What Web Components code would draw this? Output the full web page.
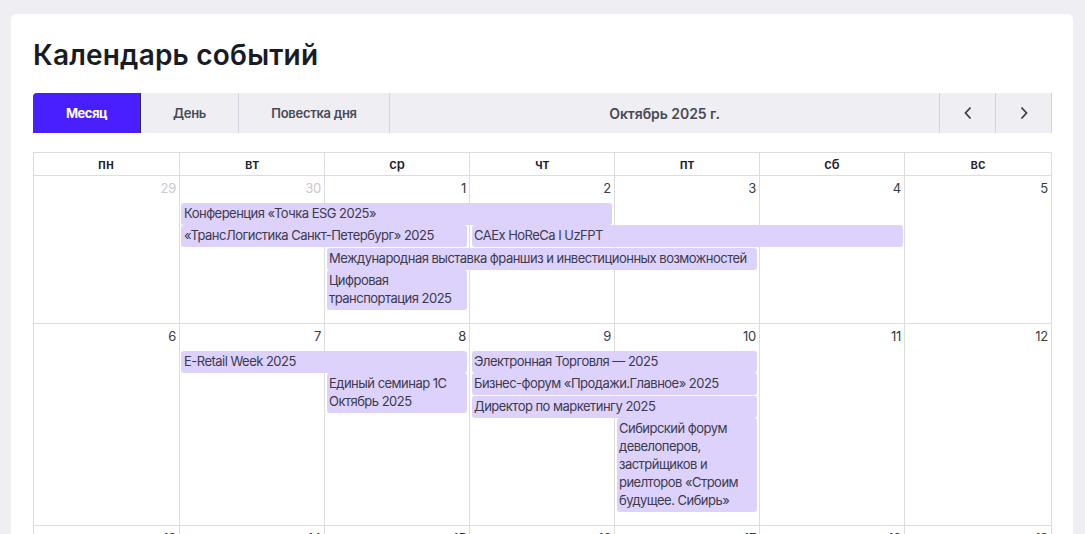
<!DOCTYPE html>
<html lang="ru"><head><meta charset="utf-8"><title>Календарь событий</title>
<style>
html,body{margin:0;padding:0;height:534px;overflow:hidden;background:#eeeef3;font-family:Inter,"Noto Sans",sans-serif;}
</style></head><body>
<cal-page>
  <h-title slot="title">Календарь событий</h-title>
  <cal-toolbar slot="toolbar">
    <tool-btn active style="width:108px">Месяц</tool-btn>
    <tool-btn style="width:98px">День</tool-btn>
    <tool-btn style="width:151px">Повестка дня</tool-btn>
    <tool-title>Октябрь 2025 г.</tool-title>
    <tool-btn style="width:56px" icon="left"></tool-btn>
    <tool-btn style="width:56px" icon="right"></tool-btn>
  </cal-toolbar>
  <cal-head slot="cal"></cal-head>
  <cal-week slot="cal" days="29,30,1,2,3,4,5" muted="2" style="height:148px" rows="27px 22px 23px 22px 40px">
    <cal-event first style="grid-column:2/5;grid-row:2">Конференция «Точка ESG 2025»</cal-event>
    <cal-event first style="grid-column:2/4;grid-row:3">«ТрансЛогистика Санкт-Петербург» 2025</cal-event>
    <cal-event style="grid-column:4/7;grid-row:3;margin-right:2px">CAEx HoReCa I UzFPT</cal-event>
    <cal-event style="grid-column:3/6;grid-row:4">Международная выставка франшиз и инвестиционных возможностей</cal-event>
    <cal-event style="grid-column:3/4;grid-row:5">Цифровая транспортация 2025</cal-event>
  </cal-week>
  <cal-week slot="cal" days="6,7,8,9,10,11,12" style="height:202px" rows="27px 22px 23px 22px 94px">
    <cal-event first style="grid-column:2/4;grid-row:2">E-Retail Week 2025</cal-event>
    <cal-event style="grid-column:3/4;grid-row:3/5">Единый семинар 1С Октябрь 2025</cal-event>
    <cal-event style="grid-column:4/6;grid-row:2">Электронная Торговля — 2025</cal-event>
    <cal-event style="grid-column:4/6;grid-row:3">Бизнес-форум «Продажи.Главное» 2025</cal-event>
    <cal-event style="grid-column:4/6;grid-row:4">Директор по маркетингу 2025</cal-event>
    <cal-event style="grid-column:5/6;grid-row:5">Сибирский форум девелоперов, застрйщиков и риелторов «Строим будущее. Сибирь»</cal-event>
  </cal-week>
  <cal-week slot="cal" days="13,14,15,16,17,18,19" style="height:150px" rows="27px"></cal-week>
</cal-page>
<script>
const tpl=(css,html)=>{const t=document.createElement('template');t.innerHTML=`<style>${css}</style>${html}`;return t;};
const def=(name,t,init)=>customElements.define(name,class extends HTMLElement{
  constructor(){super();this.attachShadow({mode:'open'}).appendChild(t.content.cloneNode(true));}
  connectedCallback(){init&&init.call(this);}
});
def('cal-page',tpl(`:host{display:block;box-sizing:border-box;margin:14px 12px 0 11px;padding:22px 21px 22px 22px;background:#fff;border-radius:5px 5px 0 0;color:#1c1f2b}
.cal{display:block;margin-top:19px;}`,
`<slot name="title"></slot><slot name="toolbar"></slot><div class="cal"><slot name="cal"></slot></div>`));
def('h-title',tpl(`:host{display:block;font-size:28px;font-weight:600;line-height:38px;height:38px;margin-bottom:19px;color:#191c27;letter-spacing:.2px}`,`<slot></slot>`));
def('cal-toolbar',tpl(`:host{display:flex;height:40px;background:#eeeef3;border-radius:4px 0 0 0;box-shadow:inset -1px 0 #d4d4e0}`,`<slot></slot>`));
def('tool-btn',tpl(`:host{display:flex;align-items:center;justify-content:center;box-sizing:border-box;flex:none;height:40px;font-size:13px;font-weight:600;letter-spacing:-.3px;color:#4a4a55;border-right:1px solid #d4d4e0}
:host([active]){background:#4a1fff;color:#fff;border-right-color:#2c2c3a;border-top-left-radius:4px;font-weight:700;letter-spacing:-.5px}
svg{display:block}`,`<slot></slot><span id="i"></span>`),function(){
  const d=this.getAttribute('icon');
  if(d){this.shadowRoot.getElementById('i').innerHTML=`<svg width="10" height="14" viewBox="0 0 10 14" fill="none" stroke="#3a3a46" stroke-width="1.7"><path d="${d==='left'?'M7.5 1.5 2.5 7l5 5.5':'M2.5 1.5 7.5 7l-5 5.5'}"/></svg>`;}
});
def('tool-title',tpl(`:host{flex:1;display:flex;align-items:center;justify-content:center;font-size:14px;font-weight:600;letter-spacing:-.05px;color:#4a4a55;border-right:1px solid #d4d4e0}`,`<slot></slot>`));
const COLS='147px 145px 145px 145px 145px 145px 147px';
def('cal-head',tpl(`:host{display:grid;grid-template-columns:${COLS};box-sizing:border-box;height:24px;border:1px solid #ddd;border-width:1px 0 1px 0;box-shadow:inset 1px 0 #ddd}
span{display:flex;align-items:center;justify-content:center;font-size:13px;font-weight:600;color:#23232d;border-right:1px solid #ddd;}`,
`<span>пн</span><span>вт</span><span>ср</span><span>чт</span><span>пт</span><span>сб</span><span>вс</span>`));
def('cal-week',tpl(`:host{display:block;box-sizing:border-box;}
#g{display:grid;grid-template-columns:${COLS};height:100%;box-sizing:border-box;border-bottom:1px solid #ddd;}
.c{grid-row:1/30;box-sizing:border-box;border-right:1px solid #ddd;text-align:right;padding:4px 3px 0 0;font-size:13px;line-height:16px;letter-spacing:-.25px;color:#3a3a44}
.c:first-child{border-left:1px solid #ddd}
.m{color:#c9c9cf}
slot{display:contents}
::slotted(*){z-index:1}`,`<div id="g"><slot></slot></div>`),function(){
  const g=this.shadowRoot.getElementById('g');
  if(g.querySelector('.c'))return;
  const m=+(this.getAttribute('muted')||0);
  g.style.gridTemplateRows=this.getAttribute('rows');
  const s=g.querySelector('slot');
  this.getAttribute('days').split(',').forEach((d,i)=>{const c=document.createElement('div');c.className='c'+(i<m?' m':'');c.textContent=d;c.style.gridColumn=(i+1)+'/'+(i+2);g.insertBefore(c,s);});
});
def('cal-event',tpl(`:host{display:block;box-sizing:border-box;margin:0 3px 0 2px;padding:1px 2px 3px;background:#dcd2fc;border-radius:3px;font-size:13px;line-height:18px;letter-spacing:-.52px;color:#3c3a4c;align-self:start}
:host([first]){margin-left:1px;padding-left:3px}`,`<slot></slot>`));
</script>
</body></html>
